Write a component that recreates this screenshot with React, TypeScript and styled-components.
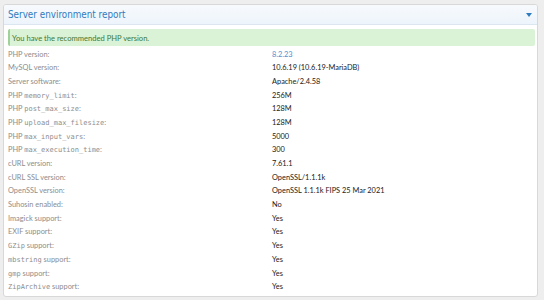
import React from 'react';
import styled, { createGlobalStyle } from 'styled-components';

const GlobalStyle = createGlobalStyle`
	html, body {
		margin: 0;
		padding: 0;
		background: #eeeeee;
	}
	body {
		font-family: Lato, 'Open Sans', sans-serif;
	}
`;

const Page = styled.div`
	padding: 4px 6px 3px 3px;
	width: 544px;
	height: 300px;
	box-sizing: border-box;
`;

const Block = styled.section`
	background: #ffffff;
	border: 1px solid #d8d8d8;
	border-radius: 3px;
	height: 100%;
	box-sizing: border-box;
	overflow: hidden;
`;

const Header = styled.h2`
	margin: 0;
	display: flex;
	align-items: center;
	justify-content: space-between;
	height: 19px;
	padding: 0 5px 0 4px;
	background: linear-gradient(to bottom, #f7fafd, #edf4fb);
	border-bottom: 1px solid #dce6f0;
	font-family: 'Liberation Sans Narrow', 'DejaVu Sans Condensed', Lato, sans-serif;
	font-stretch: condensed;
	font-size: 9.8px;
	font-weight: 400;
	color: #2f7bbf;
`;

const Caret = styled.span`
	width: 0;
	height: 0;
	border-left: 3px solid transparent;
	border-right: 3px solid transparent;
	border-top: 4px solid #2f7bbf;
	margin-top: 1px;
`;

const Body = styled.div`
	padding: 4px 2px 0 4px;
`;

const Message = styled.div`
	background: #daf2d6;
	border-left: 2px solid #9fd29a;
	border-radius: 2px;
	padding: 0 2px;
	height: 17px;
	display: flex;
	align-items: center;
	font-size: 7.6px;
	color: #3f7a37;
	margin-bottom: 1.5px;
`;

const Pairs = styled.dl`
	margin: 0;
	display: grid;
	grid-template-columns: 264px 1fr;
	grid-auto-rows: 13.7px;
	font-size: 7.4px;
	line-height: 13.7px;
`;

const Term = styled.dt`
	color: #8d8d8d;
	margin: 0;
`;

const Value = styled.dd<{ $link?: boolean }>`
	margin: 0;
	color: ${({ $link }) => ($link ? '#4b92d2' : '#1a1a1a')};
`;

const Code = styled.code`
	font-family: 'DejaVu Sans Mono', monospace;
	font-size: 7px;
	line-height: 1;
`;

type Row = { label: React.ReactNode; value: string; link?: boolean };

const rows: Row[] = [
	{ label: 'PHP version:', value: '8.2.23', link: true },
	{ label: 'MySQL version:', value: '10.6.19 (10.6.19-MariaDB)' },
	{ label: 'Server software:', value: 'Apache/2.4.58' },
	{ label: <>PHP <Code>memory_limit</Code>:</>, value: '256M' },
	{ label: <>PHP <Code>post_max_size</Code>:</>, value: '128M' },
	{ label: <>PHP <Code>upload_max_filesize</Code>:</>, value: '128M' },
	{ label: <>PHP <Code>max_input_vars</Code>:</>, value: '5000' },
	{ label: <>PHP <Code>max_execution_time</Code>:</>, value: '300' },
	{ label: 'cURL version:', value: '7.61.1' },
	{ label: 'cURL SSL version:', value: 'OpenSSL/1.1.1k' },
	{ label: 'OpenSSL version:', value: 'OpenSSL 1.1.1k FIPS 25 Mar 2021' },
	{ label: 'Suhosin enabled:', value: 'No' },
	{ label: 'Imagick support:', value: 'Yes' },
	{ label: 'EXIF support:', value: 'Yes' },
	{ label: <><Code>GZip</Code> support:</>, value: 'Yes' },
	{ label: <><Code>mbstring</Code> support:</>, value: 'Yes' },
	{ label: <><Code>gmp</Code> support:</>, value: 'Yes' },
	{ label: <><Code>ZipArchive</Code> support:</>, value: 'Yes' },
];

export default function App() {
	return (
		<>
			<GlobalStyle />
			<Page>
				<Block>
					<Header>
						Server environment report
						<Caret />
					</Header>
					<Body>
						<Message>You have the recommended PHP version.</Message>
						<Pairs>
							{rows.map((row, i) => (
								<React.Fragment key={i}>
									<Term>{row.label}</Term>
									<Value $link={row.link}>{row.value}</Value>
								</React.Fragment>
							))}
						</Pairs>
					</Body>
				</Block>
			</Page>
		</>
	);
}
